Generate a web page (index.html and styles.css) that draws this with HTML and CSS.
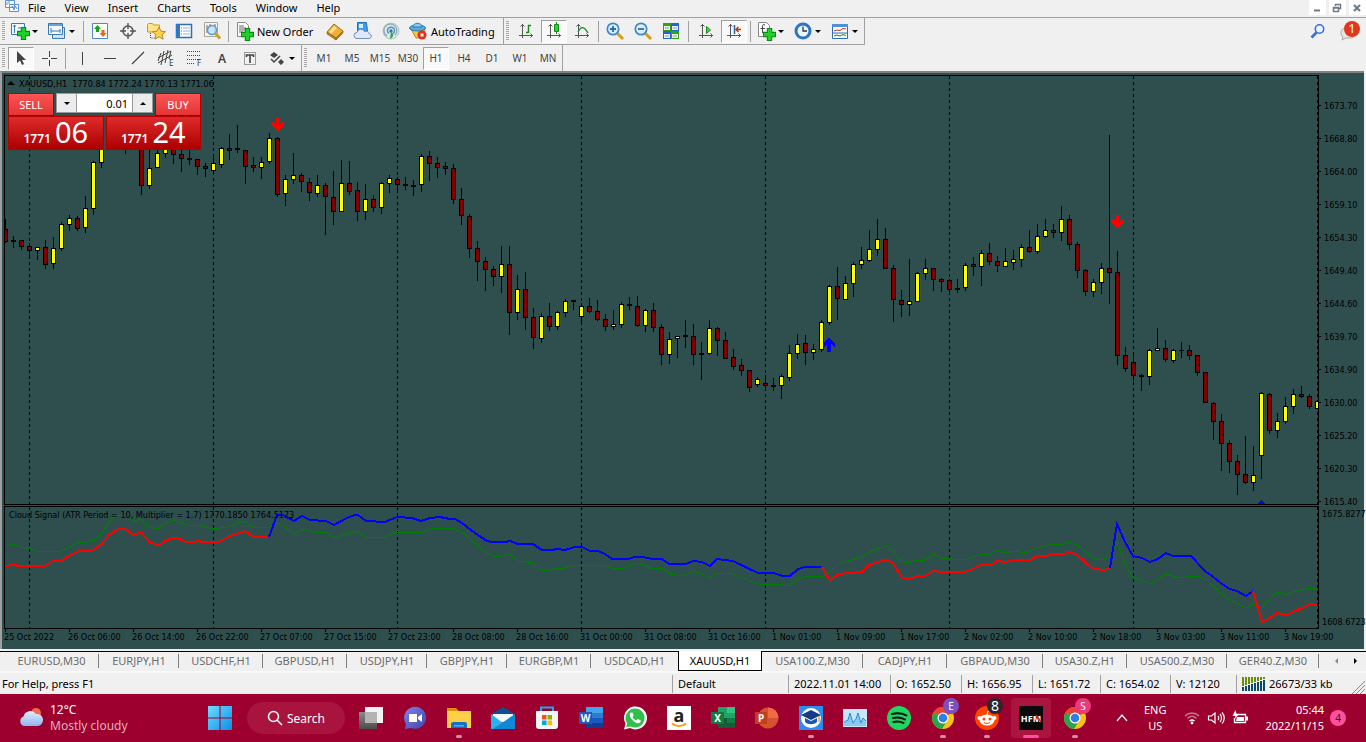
FILE: index.html
```
<!DOCTYPE html>
<html lang="en">
<head>
  <meta charset="UTF-8">
  <title>XAUUSD,H1</title>
  <link rel="stylesheet" href="styles.css">
</head>
<body>
  <svg class="defs" aria-hidden="true">
    <defs>
      <linearGradient id="blue" x1="0" y1="0" x2="1" y2="1"><stop offset="0" stop-color="#6fdcff"/><stop offset="1" stop-color="#0a8fe8"/></linearGradient>
      <linearGradient id="cloud" x1="0" y1="0" x2="0" y2="1"><stop offset="0" stop-color="#e4edfb"/><stop offset="1" stop-color="#8fb4ee"/></linearGradient>
      <linearGradient id="chat" x1="0" y1="0" x2="1" y2="1"><stop offset="0" stop-color="#7b83eb"/><stop offset="1" stop-color="#4146a8"/></linearGradient>
      <linearGradient id="grey" x1="0" y1="0" x2="0" y2="1"><stop offset="0" stop-color="#8a8a8a"/><stop offset="1" stop-color="#4c4c4c"/></linearGradient>
      <symbol id="axes" viewBox="0 0 20 20"><path d="M6.500 3v14M3 14.500h14M4.500 5.500l2-2 2 2M14.500 12.500l2 2-2 2" fill="none" stroke="#555"/></symbol>
      <symbol id="plus" viewBox="0 0 12 12"><path d="M4 .500h4V4h3.500v4H8v3.500H4V8H.500V4H4z" fill="#1fd02a" stroke="#0a8a12"/></symbol>
      <symbol id="chrome" viewBox="0 0 24 24">
        <circle cx="12" cy="12" r="11" fill="#fbc116"/>
        <path d="M12 12L2.500 6.500A11 11 0 0 1 21.500 6.500z" fill="#ea4335"/>
        <path d="M2.500 6.500A11 11 0 0 0 11 23l5.500-9L12 12z" fill="#2ba24c"/>
        <path d="M2.500 6.500A11 11 0 0 1 21.500 6.500H12z" fill="#ea4335"/>
        <circle cx="12" cy="12" r="5.500" fill="#fff"/><circle cx="12" cy="12" r="4.300" fill="#2f7de9"/>
      </symbol>
    </defs>
  </svg>

  <nav class="menubar">
    <svg class="app-icon" viewBox="0 0 16 16"><path d="M1.500 1.500h9v7h-9zM5.500 5.500h9v7h-9z" fill="#fff" stroke="#5b8fe0"/><path d="M7 9l1.500-2 1.500 4 1.500-4 1.500 3M3 3v3M5 2v3" fill="none" stroke="#5b8fe0"/></svg>
    <a href="#">File</a>
    <a href="#">View</a>
    <a href="#">Insert</a>
    <a href="#">Charts</a>
    <a href="#">Tools</a>
    <a href="#">Window</a>
    <a href="#">Help</a>
    <div class="window-controls">
      <button aria-label="Minimize"><svg viewBox="0 0 10 10"><path d="M2 7.500h6" stroke="#6d7b8a" stroke-width="2"/></svg></button>
      <button aria-label="Restore"><svg viewBox="0 0 10 10"><path d="M3.500 3V1.500h5v4H7M1.500 4.500h5v4h-5zM1 5h6M3 1.500h6" fill="none" stroke="#6d7b8a" stroke-width="1.500"/></svg></button>
      <button aria-label="Close"><svg viewBox="0 0 10 10"><path d="M2 2l6 6M8 2L2 8" stroke="#6d7b8a" stroke-width="2.200"/></svg></button>
    </div>
  </nav>

  <div class="toolbar toolbar-main">
    <div class="group">
      <span class="grip"></span>
      <button class="tool drop" aria-label="New chart"><svg viewBox="0 0 20 20"><path d="M1.500 2.500h13v11h-13z" fill="#f4f9fe" stroke="#3b78b5"/><path d="M3 5h3M4.500 4v8M8 7h4" stroke="#3b78b5"/><use href="#plus" x="7" y="6" width="13" height="13"/></svg></button>
      <button class="tool drop" aria-label="Profiles"><svg viewBox="0 0 20 20"><path d="M5.500 6.500h12v11h-12z" fill="#cfe2f6" stroke="#3b78b5"/><path d="M1.500 2.500h14v11h-14z" fill="#f4f9fe" stroke="#3b78b5"/><path d="M2 4h13" stroke="#6fa3d8" stroke-width="2"/><path d="M4 10h9M4 7v5M13 8v4" stroke="#3b78b5"/></svg></button>
      <span class="sep"></span>
      <button class="tool" aria-label="Market watch"><svg viewBox="0 0 20 20"><path d="M2.500 2.500h15v15h-15z" fill="#fff" stroke="#4b8ac8"/><path d="M7.500 4l3.500 4H9v3H6V8H4z" fill="#19a319"/><path d="M13 16l-3.500-4h2V9h3v3h2z" fill="#e8651a"/></svg></button>
      <button class="tool" aria-label="Data window"><svg viewBox="0 0 20 20"><circle cx="10" cy="10" r="5" fill="none" stroke="#555" stroke-width="1.500"/><path d="M10 2v6M10 12v6M2 10h6M12 10h6" stroke="#555" stroke-width="1.400"/></svg></button>
      <button class="tool" aria-label="Navigator"><svg viewBox="0 0 20 20"><path d="M1.500 3.500l1-1h4l1 1.500h6v7h-12z" fill="#ffe48a" stroke="#c79a28"/><path d="M4.500 12v5h4" fill="none" stroke="#444" stroke-dasharray="1 1"/><path d="M13 6l2 4.200 4.500.500-3.300 3 .900 4.500-4.100-2.300L9 18.200l.800-4.500-3.300-3 4.500-.500z" fill="#ffd24a" stroke="#b98a1a"/></svg></button>
      <button class="tool" aria-label="Terminal"><svg viewBox="0 0 20 20"><path d="M2.500 3.500h15v13h-15z" fill="#fff" stroke="#2d6db5" stroke-width="1.500"/><path d="M2 3h4v14H2z" fill="#2f78c8"/><path d="M9 7h7M9 10h7M9 13h7" stroke="#8fb6df"/><path d="M7 7h1M7 10h1M7 13h1" stroke="#c33"/></svg></button>
      <button class="tool" aria-label="Strategy tester"><svg viewBox="0 0 20 20"><path d="M2.500 1.500h13v14h-13z" fill="#f7f4ea" stroke="#a7a79c"/><path d="M5 4v8M8 3v5M13 3v9" stroke="#667"/><circle cx="10" cy="9" r="4.500" fill="#bfe0fa" fill-opacity=".8" stroke="#5e98cc" stroke-width="1.500"/><path d="M13.500 12.500l4.500 5" stroke="#d4a017" stroke-width="3"/></svg></button>
      <span class="sep"></span>
      <button class="tool labelled"><svg viewBox="0 0 20 20"><path d="M3.500 1.500h8l3 3v11h-11z" fill="#fff" stroke="#888"/><path d="M5 5h5M5 7h7M5 9h7M5 11h4" stroke="#666"/><use href="#plus" x="7" y="7" width="13" height="13"/></svg>New Order</button>
      <button class="tool" aria-label="MetaEditor"><svg viewBox="0 0 20 20"><path d="M2 11l7-8 9 7-7 7z" fill="#eab13b" stroke="#a56a0c"/><path d="M2 11v2l9 6v-2zM11 17l7-7v2l-7 7z" fill="#c4811a" stroke="#8d5a08" stroke-width=".600"/><path d="M4 11l5-6 3 2-6 6z" fill="#ffe08a"/></svg></button>
      <button class="tool" aria-label="Cloud storage"><svg viewBox="0 0 20 20"><path d="M4.500 1.500h9l1 9h-10z" fill="#3f9bea" stroke="#1f6fc0"/><path d="M6 3h4v4H6z" fill="#d8efff"/><path d="M4 17.500a3 3 0 0 1 0-6 4 4 0 0 1 7.500-1 3.600 3.600 0 0 1 5 2.500 2.300 2.300 0 0 1 0 4.500z" fill="#dfe8f6" stroke="#6f8fbb"/></svg></button>
      <button class="tool" aria-label="Signals"><svg viewBox="0 0 20 20"><circle cx="10" cy="10" r="8" fill="#dce8e4" stroke="#b5c8c4"/><path d="M6 15a6.500 6.500 0 1 1 8-1" fill="none" stroke="#8fb0c0" stroke-width="1.500"/><path d="M8 12.500a3.500 3.500 0 1 1 4 0" fill="none" stroke="#5b92c0" stroke-width="1.500"/><circle cx="10" cy="10" r="1.700" fill="#3b6fc0"/><path d="M10 11c3 1 3 5-1 7z" fill="#35a443"/></svg></button>
      <button class="tool labelled autotrading"><svg viewBox="0 0 20 20"><path d="M3 8l5 9 8-1 1-8z" fill="#f3c54b" stroke="#b98718"/><ellipse cx="9.500" cy="7" rx="8" ry="3" fill="#5aa9dc" stroke="#2b78ae"/><path d="M5 6c0-5 9-5 9 0z" fill="#8ccbf0" stroke="#2b78ae"/><circle cx="14" cy="14" r="4.500" fill="#e2301c"/><path d="M12.500 12.500h3v3h-3z" fill="#fff"/></svg>AutoTrading</button>
    </div>
    <div class="group">
      <span class="grip"></span>
      <button class="tool" aria-label="Bar chart"><svg viewBox="0 0 20 20"><use href="#axes"/><path d="M12.500 4v8M12 4.500h3M10 11.500h2" stroke="#158a1c" stroke-width="1.500"/></svg></button>
      <button class="tool pressed" aria-label="Candlesticks"><svg viewBox="0 0 20 20"><use href="#axes"/><path d="M12.500 1v12" stroke="#158a1c"/><path d="M10.500 3.500h4v7h-4z" fill="#2fd136" stroke="#158a1c"/></svg></button>
      <button class="tool" aria-label="Line chart"><svg viewBox="0 0 20 20"><use href="#axes"/><path d="M6 11c3-6 6-6 10 1" fill="none" stroke="#158a1c" stroke-width="1.300"/></svg></button>
      <span class="sep"></span>
      <button class="tool" aria-label="Zoom in"><svg viewBox="0 0 20 20"><path d="M12 12l6 6" stroke="#d4a017" stroke-width="3"/><circle cx="8" cy="8" r="5.700" fill="#d8eefc" stroke="#3f86c8" stroke-width="1.700"/><path d="M5 8h6M8 5v6" stroke="#2b6cae" stroke-width="1.800"/></svg></button>
      <button class="tool" aria-label="Zoom out"><svg viewBox="0 0 20 20"><path d="M12 12l6 6" stroke="#d4a017" stroke-width="3"/><circle cx="8" cy="8" r="5.700" fill="#d8eefc" stroke="#3f86c8" stroke-width="1.700"/><path d="M5 8h6" stroke="#2b6cae" stroke-width="1.800"/></svg></button>
      <button class="tool" aria-label="Tile windows"><svg viewBox="0 0 20 20"><path d="M2 2h8v8H2zM10 10h8v8h-8z" fill="#3c9f12"/><path d="M10 2h8v8h-8zM2 10h8v8H2z" fill="#2862d0"/><path d="M3 5h6v4H3zM11 5h6v4h-6zM3 13h6v4H3zM11 13h6v4h-6z" fill="#e9f3e4"/><path d="M4 7h4M12 7h4M4 15h4M12 15h4" stroke="#7d9fd0"/></svg></button>
      <span class="sep wide"></span>
      <button class="tool" aria-label="Auto scroll"><svg viewBox="0 0 20 20"><use href="#axes"/><path d="M10.500 5.500l4 3.500-4 3.500z" fill="#3fd13f" stroke="#158a1c"/></svg></button>
      <button class="tool pressed" aria-label="Chart shift"><svg viewBox="0 0 20 20"><use href="#axes"/><path d="M10.500 4v9" stroke="#2161b8" stroke-width="1.500"/><path d="M12 8.500h5M14.500 6L12 8.500l2.500 2.500" fill="none" stroke="#b8380e" stroke-width="1.500"/></svg></button>
      <span class="sep"></span>
      <button class="tool drop" aria-label="Indicators"><svg viewBox="0 0 20 20"><path d="M2.500 1.500h8l3 3v11h-11z" fill="#fff" stroke="#888"/><path d="M9 4c-2-1-2.500 0-2.500 2v6M4.500 7.500H9" fill="none" stroke="#444"/><use href="#plus" x="7" y="7" width="13" height="13"/></svg></button>
      <button class="tool drop" aria-label="Periods"><svg viewBox="0 0 20 20"><circle cx="10" cy="10" r="7" fill="#eaf5ff" stroke="#2a75c4" stroke-width="3"/><path d="M10 5.500V10h4" fill="none" stroke="#333" stroke-width="1.300"/></svg></button>
      <button class="tool drop" aria-label="Templates"><svg viewBox="0 0 20 20"><path d="M2.500 3.500h15v14h-15z" fill="#fff" stroke="#2d6db5"/><path d="M2 3h16v3H2z" fill="#4f90d8"/><path d="M2 12h16" stroke="#2d6db5"/><path d="M4 10l3-1 3 .500 3-2 3 .500" fill="none" stroke="#b8380e"/><path d="M4 15l3-1 3 1 3-1.500 3 1" fill="none" stroke="#158a1c"/></svg></button>
    </div>
    <div class="toolbar-right">
      <button aria-label="Search"><svg viewBox="0 0 20 20"><circle cx="11.500" cy="7" r="4.200" fill="#eef4ff" stroke="#3b6fd8" stroke-width="1.600"/><path d="M8.500 10.500L3.500 15.500" stroke="#3b6fd8" stroke-width="2.600"/></svg></button>
      <button class="messages" aria-label="Messages"><svg viewBox="0 0 20 20"><path d="M7 6a5 5 0 0 0-2 9l-1 3 4-2h5a5 5 0 0 0 4-5z" fill="#e4e4ea" stroke="#aaa"/></svg><span class="count">1</span></button>
    </div>
  </div>

  <div class="toolbar toolbar-lines">
    <div class="group">
      <span class="grip"></span>
      <button class="tool pressed" aria-label="Cursor"><svg viewBox="0 0 20 20"><path d="M6 3v12l3-2.500 2 4.500 2-1-2-4h4z" fill="#444"/></svg></button>
      <button class="tool" aria-label="Crosshair"><svg viewBox="0 0 20 20"><path d="M10.500 3v6M10.500 12v6M3 10.500h6M12 10.500h6" stroke="#444"/></svg></button>
      <span class="sep"></span>
      <button class="tool" aria-label="Vertical line"><svg viewBox="0 0 20 20"><path d="M10.500 4v13" stroke="#444"/></svg></button>
      <button class="tool" aria-label="Horizontal line"><svg viewBox="0 0 20 20"><path d="M4 10.500h12" stroke="#444"/></svg></button>
      <button class="tool" aria-label="Trendline"><svg viewBox="0 0 20 20"><path d="M4 16L16 4" stroke="#444" stroke-width="1.200"/></svg></button>
      <button class="tool" aria-label="Channel"><svg viewBox="0 0 20 20"><path d="M2 10l13-7M2 15L16 7M5 17l3-14M9 15l3-13M13 11l2-8M2 13l3-8" stroke="#444"/><text x="13" y="18" class="icon-letter">E</text></svg></button>
      <button class="tool" aria-label="Fibonacci"><svg viewBox="0 0 20 20"><path d="M3 3.500h14M3 7.500h14M3 11.500h14M3 15.500h8" stroke="#444" stroke-dasharray="1 1"/><text x="13" y="18" class="icon-letter">F</text></svg></button>
      <button class="tool letter">A</button>
      <button class="tool" aria-label="Text label"><svg viewBox="0 0 20 20"><path d="M4.500 4.500h11v12h-11z" fill="none" stroke="#444" stroke-dasharray="1 1"/><path d="M6.500 9V7h7v2M10 7v8" fill="none" stroke="#444" stroke-width="1.600"/></svg></button>
      <button class="tool drop" aria-label="Arrows"><svg viewBox="0 0 20 20"><path d="M3 7l4-3 4 3-4 3zM11 14l3-3 3 3-3 3z" fill="#444"/><path d="M4 11l3 3 6-6" fill="none" stroke="#444" stroke-width="1.500"/></svg></button>
    </div>
    <div class="group periods">
      <span class="grip"></span>
      <button class="tool">M1</button>
      <button class="tool">M5</button>
      <button class="tool">M15</button>
      <button class="tool">M30</button>
      <button class="tool pressed">H1</button>
      <button class="tool">H4</button>
      <button class="tool">D1</button>
      <button class="tool">W1</button>
      <button class="tool">MN</button>
    </div>
  </div>

  <main class="chart">
    <section class="pane">
      <svg id="price"></svg>
      <p class="pane-title"><span class="triangle"></span>XAUUSD,H1&nbsp; 1770.84 1772.24 1770.13 1771.06</p>
      <form class="one-click">
        <div class="deal-top">
          <button type="button" class="side">SELL</button>
          <div class="volume">
            <button type="button" aria-label="Less"><span class="down"></span></button>
            <input type="text" value="0.01" aria-label="Volume">
            <button type="button" aria-label="More"><span class="up"></span></button>
          </div>
          <button type="button" class="side">BUY</button>
        </div>
        <div class="deal-prices">
          <button type="button"><small>1771</small>06</button>
          <button type="button"><small>1771</small>24</button>
        </div>
      </form>
    </section>
    <ul class="axis price-axis">
      <li>1673.70</li>
      <li>1668.80</li>
      <li>1664.00</li>
      <li>1659.10</li>
      <li>1654.30</li>
      <li>1649.40</li>
      <li>1644.60</li>
      <li>1639.70</li>
      <li>1634.90</li>
      <li>1630.00</li>
      <li>1625.20</li>
      <li>1620.30</li>
      <li>1615.40</li>
    </ul>
    <section class="pane">
      <svg id="signal"></svg>
      <p class="pane-title">Cloud Signal (ATR Period = 10, Multiplier = 1.7) 1770.1850 1764.5173</p>
    </section>
    <ul class="axis signal-axis">
      <li>1675.8277</li>
      <li>1608.6723</li>
    </ul>
    <ul class="dates">
      <li>25 Oct 2022</li>
      <li>26 Oct 06:00</li>
      <li>26 Oct 14:00</li>
      <li>26 Oct 22:00</li>
      <li>27 Oct 07:00</li>
      <li>27 Oct 15:00</li>
      <li>27 Oct 23:00</li>
      <li>28 Oct 08:00</li>
      <li>28 Oct 16:00</li>
      <li>31 Oct 00:00</li>
      <li>31 Oct 08:00</li>
      <li>31 Oct 16:00</li>
      <li>1 Nov 01:00</li>
      <li>1 Nov 09:00</li>
      <li>1 Nov 17:00</li>
      <li>2 Nov 02:00</li>
      <li>2 Nov 10:00</li>
      <li>2 Nov 18:00</li>
      <li>3 Nov 03:00</li>
      <li>3 Nov 11:00</li>
      <li>3 Nov 19:00</li>
    </ul>
  </main>

  <nav class="tabs">
    <a href="#">EURUSD,M30</a>
    <a href="#">EURJPY,H1</a>
    <a href="#">USDCHF,H1</a>
    <a href="#">GBPUSD,H1</a>
    <a href="#">USDJPY,H1</a>
    <a href="#">GBPJPY,H1</a>
    <a href="#">EURGBP,M1</a>
    <a href="#" class="last">USDCAD,H1</a>
    <a href="#" class="active">XAUUSD,H1</a>
    <a href="#">USA100.Z,M30</a>
    <a href="#">CADJPY,H1</a>
    <a href="#">GBPAUD,M30</a>
    <a href="#">USA30.Z,H1</a>
    <a href="#">USA500.Z,M30</a>
    <a href="#">GER40.Z,M30</a>
    <div class="tab-scroll">
      <button aria-label="Previous tabs" class="prev"></button>
      <button aria-label="Next tabs" class="next"></button>
    </div>
  </nav>

  <footer class="status">
    <span>For Help, press F1</span>
    <span>Default</span>
    <span>2022.11.01 14:00</span>
    <span>O: 1652.50</span>
    <span>H: 1656.95</span>
    <span>L: 1651.72</span>
    <span>C: 1654.02</span>
    <span>V: 12120</span>
    <span class="traffic"><svg id="traffic" viewBox="0 0 24 14"></svg>26673/33 kb</span>
    <svg class="resize" viewBox="0 0 15 14"><path d="M1 14L14 1M5 14l9-9M9 14l5-5" stroke="#888"/></svg>
  </footer>

  <div class="taskbar">
    <div class="weather">
      <svg viewBox="0 0 26 24"><circle cx="18" cy="7" r="5" fill="#f2694b"/><path d="M6 20a5 5 0 0 1-.500-9.500A7 7 0 0 1 18 8a6 6 0 0 1 2 12z" fill="url(#cloud)"/></svg>
      <p>12°C<span>Mostly cloudy</span></p>
    </div>
    <div class="apps">
      <button class="app" aria-label="Start"><svg viewBox="0 0 24 24"><path d="M0 0h11.500v11.500H0zM12.500 0H24v11.500H12.500zM0 12.500h11.500V24H0zM12.500 12.500H24V24H12.500z" fill="url(#blue)"/></svg></button>
      <button class="search"><svg viewBox="0 0 16 16"><circle cx="6.500" cy="6.500" r="5" fill="none" stroke="#fff" stroke-width="1.500"/><path d="M10 10l5 5" stroke="#fff" stroke-width="1.500"/></svg>Search</button>
      <button class="app" aria-label="Task view"><svg viewBox="0 0 24 24"><path d="M0 6h18v17H0z" fill="url(#grey)"/><path d="M6 1h18v16H6z" fill="#f2f2f2"/><path d="M6 6h12v11H6z" fill="#b3b3b3"/></svg></button>
      <button class="app" aria-label="Chat"><svg viewBox="0 0 24 24"><path d="M2 23l1-5A11 11 0 1 1 8 22z" fill="url(#chat)"/><path d="M6 8h8v8H6zM15 11l4-3v8l-4-3z" fill="#fff"/></svg></button>
      <button class="app open" aria-label="File Explorer"><svg viewBox="0 0 24 24"><path d="M0 2h9l3 3h12v8H0z" fill="#d9920a"/><path d="M0 5h24v17H0z" fill="#ffcf48"/><path d="M4 22v-4a2 2 0 0 1 2-2h12a2 2 0 0 1 2 2v4z" fill="#0f72c4"/><path d="M7 19h10v1.500H7z" fill="#48b0f0"/></svg></button>
      <button class="app" aria-label="Mail"><svg viewBox="0 0 24 24"><path d="M0 8l12-7 12 7v8H0z" fill="#0f4f94"/><path d="M2 8h20v8H2z" fill="#f3f7fa"/><path d="M0 8l12 9 12-9v15H0z" fill="#28b3ee"/><path d="M24 8v15H2z" fill="#1188d6"/><path d="M2 8h20l-10 7.500z" fill="#f3f7fa"/></svg></button>
      <button class="app" aria-label="Store"><svg viewBox="0 0 24 24"><path d="M6 6V1.500h12V6" fill="none" stroke="#20a8e8" stroke-width="2"/><path d="M1 5h22v15a3 3 0 0 1-3 3H4a3 3 0 0 1-3-3z" fill="#f6f6f6"/><path d="M7 9h4.500v4.500H7z" fill="#f25022"/><path d="M12.500 9H17v4.500h-4.500z" fill="#7fba00"/><path d="M7 14.500h4.500V19H7z" fill="#00a4ef"/><path d="M12.500 14.500H17V19h-4.500z" fill="#ffb900"/></svg></button>
      <button class="app" aria-label="Word"><svg viewBox="0 0 24 24"><path d="M7 1h17v6H7z" fill="#41a5ee"/><path d="M7 7h17v5H7z" fill="#2b7cd3"/><path d="M7 12h17v5H7z" fill="#185abd"/><path d="M7 17h17v5H7z" fill="#103f91"/><path d="M0 6h13v12H0z" fill="#1d5ab8"/><text x="6.500" y="16" class="office">W</text></svg></button>
      <button class="app" aria-label="WhatsApp"><svg viewBox="0 0 24 24"><path d="M1 23.500l1.600-5.800A11.500 11.500 0 1 1 7 22z" fill="#fff"/><path d="M3.200 21.200l1-3.800a9.500 9.500 0 1 1 3.300 3z" fill="#2fbf4a"/><path d="M8 6.500c-2 1-1.500 4 1 7s6 4.700 8 3c1-1 1-2 .500-2.200l-2.600-1.300c-.900 0-1 1.500-1.800 1.300-1.600-.600-3-2-3.500-3.400 0-.700 1.100-1 .900-1.800L9.500 6.500z" fill="#fff"/></svg></button>
      <button class="app" aria-label="Amazon"><svg viewBox="0 0 24 24"><path d="M0 0h24v24H0z" fill="#fff"/><text x="12" y="16" class="amazon">a</text><path d="M5 17.500c4 3.500 10 3.500 14 0" fill="none" stroke="#f90" stroke-width="1.800"/></svg></button>
      <button class="app" aria-label="Excel"><svg viewBox="0 0 24 24"><path d="M7 1h17v11H7z" fill="#21a366"/><path d="M16 1h8v6h-8z" fill="#33c481"/><path d="M7 12h17v10H7z" fill="#185c37"/><path d="M16 12h8v5h-8z" fill="#107c41"/><path d="M0 6h13v12H0z" fill="#107c41"/><text x="6.500" y="16" class="office">X</text></svg></button>
      <button class="app" aria-label="PowerPoint"><svg viewBox="0 0 24 24"><circle cx="13" cy="12" r="10.500" fill="#d35230"/><path d="M13 1.500A10.500 10.500 0 0 1 23.500 12H13z" fill="#ed6c47"/><path d="M0 6h12v12H0z" fill="#c43e1c"/><text x="6" y="16" class="office">P</text></svg></button>
      <button class="app open" aria-label="Learning"><svg viewBox="0 0 24 24"><path d="M0 0h24v24H0z" fill="#2d8cf0"/><circle cx="12" cy="12" r="10" fill="#fff"/><path d="M2 9l10-5 10 5-10 5z" fill="#123c86"/><path d="M6 12v4c3 3 9 3 12 0v-4l-6 3z" fill="#1b58b8"/><path d="M20 10v6" stroke="#f0a020" stroke-width="1.500"/></svg></button>
      <button class="app" aria-label="Monitor"><svg viewBox="0 0 24 24"><path d="M0 3h24v18H0z" fill="#c8e6f7"/><path d="M1 16l4-2 2-7 3 10 3-4 2-6 3 10 2-5 3 3v5H1z" fill="#8cc8ee"/><path d="M1 16l4-2 2-7 3 10 3-4 2-6 3 10 2-5 3 3" fill="none" stroke="#2a8bd0"/></svg></button>
      <button class="app" aria-label="Spotify"><svg viewBox="0 0 24 24"><circle cx="12" cy="12" r="12" fill="#1ed760"/><path d="M5 8c5-1.500 10-1 14.500 1.500M6 12c4-1 8-.800 12 1.500M6.500 16c4-1 7-.500 10 1" fill="none" stroke="#101010" stroke-width="2" stroke-linecap="round"/></svg></button>
      <button class="app open" aria-label="Chrome"><svg viewBox="0 0 24 24"><use href="#chrome"/></svg><span class="badge violet">E</span></button>
      <button class="app open" aria-label="Reddit"><svg viewBox="0 0 24 24"><circle cx="12" cy="12" r="12" fill="#ff4500"/><ellipse cx="12" cy="14" rx="7.500" ry="5.500" fill="#fff"/><circle cx="4.500" cy="12" r="2" fill="#fff"/><circle cx="19.500" cy="12" r="2" fill="#fff"/><path d="M12 9l1-4 4 1" fill="none" stroke="#fff"/><circle cx="9" cy="13" r="1.500" fill="#ff4500"/><circle cx="15" cy="13" r="1.500" fill="#ff4500"/><path d="M9 16.500c2 1.300 4 1.300 6 0" fill="none" stroke="#ff4500"/></svg><span class="badge dark">8</span></button>
      <button class="app open current" aria-label="HFM"><svg viewBox="0 0 24 24"><path d="M0 0h24v24H0z" fill="#0a0a0a"/><text x="12" y="16" class="hfm">HFM</text><path d="M17 9l5 7" stroke="#e01f2d" stroke-width="1.500"/></svg></button>
      <button class="app open" aria-label="Chrome"><svg viewBox="0 0 24 24"><use href="#chrome"/></svg><span class="badge pink">S</span></button>
    </div>
    <div class="tray">
      <button class="chevron" aria-label="Show hidden icons"><svg viewBox="0 0 12 12"><path d="M1 9l5-6 5 6" fill="none" stroke="#fff" stroke-width="1.200"/></svg></button>
      <p class="language">ENG<br>US</p>
      <svg viewBox="0 0 18 18"><path d="M2 7c4-4 10-4 14 0M4.500 9.500c3-3 6-3 9 0" fill="none" stroke="#c4788f" stroke-width="1.300"/><path d="M6.500 12c2-1.700 3-1.700 5 0" fill="none" stroke="#fff" stroke-width="1.500"/><circle cx="9" cy="14" r="1.400" fill="#fff"/></svg>
      <svg viewBox="0 0 18 18"><path d="M1.500 7v4h3L8 14V4L4.500 7zM11 7c1 1 1 3 0 4M13 5c2 2 2 6 0 8M15 3.500c3 3 3 8 0 11" fill="none" stroke="#fff" stroke-width="1.200"/></svg>
      <svg viewBox="0 0 18 18"><path d="M4 5.500h10.500v8H3.500V9" fill="none" stroke="#fff" stroke-width="1.300"/><path d="M6 8h7v4H5zM15 7.500h2v4h-2z" fill="#fff"/><path d="M4.500 1L1.500 7h3l-1.500 4 5-6H5.500z" fill="#fff"/></svg>
      <p class="clock">05:44<br>2022/11/15</p>
      <span class="notifications">4</span>
    </div>
  </div>

  <script src="chart.js"></script>
</body>
</html>
```

FILE: styles.css
```
* {
  box-sizing: border-box;
}

body {
  margin: 0;
  height: 100vh;
  display: flex;
  flex-direction: column;
  overflow: hidden;
  background: #f0f0f0;
  color: #000;
  font-family: "Noto Sans", "Open Sans", sans-serif;
  font-size: 11px;
}

button {
  margin: 0;
  padding: 0;
  border: none;
  background: none;
  color: inherit;
  font: inherit;
}

a {
  color: inherit;
  text-decoration: none;
}

p,
ul {
  margin: 0;
  padding: 0;
  list-style: none;
}

svg {
  display: block;
  flex: none;
}

.defs {
  position: absolute;
  width: 0;
  height: 0;
}

/* menu */

.menubar {
  display: flex;
  align-items: center;
  gap: 19px;
  height: 18px;
  padding-left: 4px;
  padding-bottom: 3px;
  border-bottom: 1px solid #a0a0a0;
}

.app-icon {
  width: 16px;
  height: 16px;
  margin-right: -11px;
}

.window-controls {
  display: flex;
  gap: 3px;
  margin-left: auto;
}

.window-controls button {
  width: 17px;
  height: 15px;
  padding: 3px;
  background: #fff;
}

.window-controls svg {
  width: 10px;
  height: 10px;
}

/* toolbars */

.toolbar {
  display: flex;
  height: 27px;
}

.toolbar-lines {
  height: 26px;
}

.toolbar-main .group {
  border-bottom: 1px solid #a0a0a0;
}

.group {
  display: flex;
  align-items: center;
  padding: 1px 0 1px 2px;
  border-right: 1px solid #a0a0a0;
}

.grip {
  width: 3px;
  height: 20px;
  margin-right: 2px;
  background: repeating-linear-gradient(#a8a8a8 0 1px, #f0f0f0 1px 2px);
}

.group + .group .grip {
  margin-right: 3px;
}

.sep {
  width: 1px;
  height: 21px;
  margin: 0 2px;
  background: #a0a0a0;
}

.sep.wide {
  margin: 0 3px;
}

.tool {
  display: flex;
  align-items: center;
  justify-content: center;
  width: 26px;
  height: 23px;
  margin: 0 1px;
}

.tool svg {
  width: 20px;
  height: 20px;
  overflow: visible;
}

.tool.drop {
  justify-content: flex-start;
  width: 35px;
  padding-left: 2px;
}

.tool.drop::after {
  content: "";
  margin-left: 2px;
  border: 3px solid transparent;
  border-top-color: #000;
  border-bottom: 0;
}

.tool.pressed {
  background: #f9f9f9;
  border: 1px solid #fff;
  border-top-color: #a0a0a0;
  border-left-color: #a0a0a0;
}

.tool.labelled {
  width: 88px;
  justify-content: flex-start;
  gap: 3px;
  padding-left: 2px;
}

.tool.autotrading {
  width: 96px;
}

.tool.letter {
  color: #444;
  font-size: 12px;
  font-weight: 600;
}

.icon-letter {
  font-size: 8px;
  fill: #333;
}

.periods {
  color: #444;
  font-size: 10px;
}

.toolbar-right {
  display: flex;
  align-items: center;
  gap: 10px;
  margin-left: auto;
  padding-right: 6px;
}

.toolbar-right svg {
  width: 20px;
  height: 20px;
}

.messages {
  position: relative;
  width: 22px;
}

.count {
  position: absolute;
  top: -1px;
  right: 0;
  width: 16px;
  height: 16px;
  border-radius: 8px;
  background: #e2371f;
  color: #fff;
  font-size: 12px;
  line-height: 16px;
}

/* chart */

.chart {
  flex: 1;
  min-height: 0;
  display: grid;
  grid-template-columns: minmax(0, 1fr) 45px;
  grid-template-rows: minmax(0, 1fr) 123px 19px;
  row-gap: 1px;
  padding: 2px 0 0 2px;
  margin-right: 2px;
  border-top: 2px solid #808080;
  border-left: 2px solid #a0a0a0;
  background: #2f4f4f;
  font-family: "DejaVu Sans Condensed", "DejaVu Sans", sans-serif;
  font-size: 9px;
}

.pane {
  position: relative;
  border: 1px solid #000;
}

.pane > svg {
  width: 100%;
  height: 100%;
  overflow: hidden;
  shape-rendering: crispEdges;
}

.pane-title {
  position: absolute;
  top: 2px;
  left: 4px;
  line-height: 12px;
  white-space: nowrap;
}

.triangle {
  display: inline-block;
  margin: 0 4px 2px -2px;
  border: 4px solid transparent;
  border-bottom-color: #000;
  border-top: 0;
}

.day {
  stroke: #000;
  stroke-dasharray: 3 3;
}

.wick {
  fill: #000;
}

.candle {
  stroke: #000;
}

.rise {
  fill: #ff0;
}

.fall {
  fill: #800000;
}

.sell-arrow {
  fill: #f00;
}

.buy-arrow {
  fill: #00f;
}

.band {
  fill: none;
  stroke: #008000;
}

.trend {
  fill: none;
  stroke-width: 2;
}

.trend.long {
  stroke: #f00;
}

.trend.short {
  stroke: #00f;
}

.axis li {
  display: flex;
  align-items: center;
  gap: 3px;
}

.axis li::before {
  content: "";
  width: 2px;
  height: 1px;
  background: #000;
}

.price-axis {
  min-height: 0;
  padding-top: 14px;
}

.price-axis li {
  height: 33px;
}

.signal-axis {
  display: flex;
  flex-direction: column;
  justify-content: space-between;
}

.signal-axis li {
  height: 15px;
}

.dates {
  grid-column: 1 / -1;
  display: flex;
  margin-top: -1px;
  overflow: hidden;
}

.dates li {
  flex: none;
  width: 64px;
  line-height: 11px;
  white-space: nowrap;
}

.dates li::before {
  content: "";
  display: block;
  width: 1px;
  height: 3px;
  margin-left: 1px;
  background: #000;
}

/* one click trading */

.one-click {
  position: absolute;
  top: 17px;
  left: 3px;
  width: 193px;
  color: #fff;
  font-family: "Noto Sans", sans-serif;
  font-size: 11px;
}

.deal-top {
  display: flex;
  justify-content: space-between;
  align-items: flex-start;
}

.side {
  width: 46px;
  height: 23px;
  padding-bottom: 1px;
  border: 1px solid #b40000;
  border-bottom-color: #800;
  background: linear-gradient(#fb5454, #e53434);
}

.volume {
  display: flex;
  width: 97px;
  height: 20px;
  border: 1px solid #999;
  background: #fff;
}

.volume button {
  display: flex;
  align-items: center;
  justify-content: center;
  width: 19px;
  background: #ececec;
}

.volume input {
  flex: 1;
  min-width: 0;
  padding: 0 4px;
  border: solid #999;
  border-width: 0 1px;
  font: inherit;
  text-align: right;
}

.down,
.up {
  border: 3px solid transparent;
  border-top-color: #000;
  border-bottom: 0;
}

.up {
  border-top: 0;
  border-bottom: 3px solid #000;
}

.deal-prices {
  display: flex;
  gap: 2px;
}

.deal-prices button {
  display: flex;
  align-items: baseline;
  justify-content: center;
  gap: 4px;
  flex: 1;
  height: 34px;
  border: 1px solid #b40000;
  background: linear-gradient(#de2a2a, #ac0000);
  font-size: 29px;
  line-height: 30px;
}

.deal-prices small {
  font-size: 12px;
  font-weight: 600;
}

/* chart tabs */

.tabs {
  display: grid;
  grid-template-columns: 99px 80px 84px 84px 80px 80px 84px 87px 84px 101px 84px 96px 84px 100px 92px 1fr;
  height: 22px;
  margin-top: 2px;
  box-shadow: inset 0 1px #000;
  border-bottom: 2px solid #fafafa;
  color: #6d6d6d;
  text-align: center;
}

.tabs a {
  position: relative;
  line-height: 20px;
  white-space: nowrap;
}

.tabs a:first-child {
  padding-left: 4px;
}

.tabs a:not(.active):not(.last)::after {
  content: "";
  position: absolute;
  top: 3px;
  right: 0;
  width: 1px;
  height: 14px;
  background: #808080;
}

.tabs .active {
  line-height: 19px;
  border: 1px solid #000;
  border-top: 0;
  background: #fff;
  color: #000;
}

.tab-scroll {
  display: flex;
  align-items: center;
  justify-content: flex-end;
  gap: 16px;
  padding-right: 9px;
}

.tab-scroll button {
  border: 3px solid transparent;
}

.tab-scroll .prev {
  border-right-color: #888;
  border-left: 0;
}

.tab-scroll .next {
  border-left-color: #000;
  border-right: 0;
}

/* status bar */

.status {
  display: grid;
  grid-template-columns: 1fr 116px 102px 71px 71px 68px 70px 66px 115px 15px;
  align-items: center;
  height: 21px;
  white-space: nowrap;
}

.status span {
  height: 18px;
  padding-left: 5px;
  border-left: 1px solid #a0a0a0;
  line-height: 17px;
}

.status span:first-child {
  padding-left: 2px;
  border: none;
}

.status .traffic {
  display: flex;
  align-items: center;
  gap: 3px;
}

.traffic svg {
  width: 24px;
  height: 14px;
}

.resize {
  width: 15px;
  height: 14px;
  align-self: end;
}

/* taskbar */

.taskbar {
  display: grid;
  grid-template-columns: 198px 1fr auto;
  align-items: center;
  height: 48px;
  background: #9d002e;
  color: #fff;
  font-size: 12px;
}

.weather {
  display: flex;
  align-items: center;
  gap: 6px;
  padding-left: 18px;
  line-height: 16px;
}

.weather svg {
  width: 26px;
  height: 24px;
}

.weather span {
  display: block;
  color: #e0b0be;
}

.apps {
  display: flex;
  align-items: center;
}

.app {
  position: relative;
  display: flex;
  align-items: center;
  justify-content: center;
  width: 40px;
  height: 40px;
  margin: 0 2px;
  border-radius: 4px;
}

.app svg {
  width: 24px;
  height: 24px;
  overflow: visible;
}

.app.open::after {
  content: "";
  position: absolute;
  bottom: 0;
  left: 17px;
  width: 6px;
  height: 3px;
  border-radius: 2px;
  background: #d48fa4;
}

.app.current {
  background: #a9153f;
}

.app.current::after {
  left: 12px;
  width: 16px;
  background: #ff4fa3;
}

.office {
  fill: #fff;
  font-size: 10px;
  font-weight: bold;
  text-anchor: middle;
}

.amazon {
  fill: #222;
  font-size: 18px;
  font-weight: bold;
  text-anchor: middle;
}

.hfm {
  fill: #fff;
  font-size: 9px;
  font-weight: bold;
  text-anchor: middle;
}

.badge {
  position: absolute;
  top: 0;
  right: 4px;
  width: 16px;
  height: 16px;
  border-radius: 8px;
  font-size: 10px;
  line-height: 16px;
}

.violet {
  background: #7a52bd;
}

.dark {
  background: #29262e;
  font-size: 14px;
}

.pink {
  background: #ea3a7b;
}

.search {
  display: flex;
  align-items: center;
  justify-content: center;
  gap: 4px;
  width: 98px;
  height: 32px;
  margin: 0 4px 0 5px;
  border-radius: 16px;
  background: #a8143e;
}

.search svg {
  width: 16px;
  height: 16px;
}

.tray {
  display: flex;
  align-items: center;
  gap: 6px;
  padding-right: 20px;
  line-height: 16px;
  text-align: center;
}

.tray svg {
  width: 18px;
  height: 18px;
}

.tray .chevron svg {
  width: 12px;
  height: 12px;
}

.language {
  margin: 0 11px 0 10px;
  font-size: 11px;
}

.clock {
  margin-left: 10px;
  font-size: 11px;
  text-align: right;
}

.notifications {
  width: 16px;
  height: 16px;
  border-radius: 8px;
  background: #ff4fa0;
  color: #222;
  font-size: 10px;
}
```

FILE: chart.js
```
const STEP = 8;      // distance between two candles
const TOP = 76;      // y of the first row inside the price pane

// high, body top, body bottom, low; y = rise, r = fall
const candles = `
219 229 242 243 r,236 240 241 248 r,240 240 247 250 r,243 246 251 258 r,247 247 251 260 y,240 247 265 269 r,
237 248 264 269 y,222 224 249 251 y,215 218 225 231 y,216 218 229 231 r,196 208 228 233 y,161 162 209 215 y,
125 130 163 168 y,120 125 131 140 r,120 124 130 140 y,120 126 132 154 r,120 128 134 145 r,125 132 186 195 r,
148 168 186 189 y,140 153 168 168 y,140 148 154 158 y,140 146 155 164 r,150 154 159 172 r,150 158 159 165 r,
159 159 167 175 r,163 166 169 177 r,157 163 171 172 y,147 148 165 168 y,134 148 151 160 r,125 148 149 153 r,
150 150 167 184 r,157 165 168 172 r,157 162 168 179 y,133 138 162 164 y,137 138 195 197 r,175 179 194 206 y,
153 175 180 184 y,173 175 182 192 r,178 182 193 201 r,175 185 194 197 y,183 185 197 235 r,171 197 212 225 r,
160 183 212 212 y,161 183 192 195 r,182 190 212 221 r,184 199 212 220 y,195 199 208 212 r,182 183 208 214 y,
175 178 184 193 y,177 179 185 192 r,177 184 185 190 r,180 185 186 196 r,154 156 185 192 y,151 156 164 181 r,
157 163 168 178 r,162 166 169 175 r,164 168 200 204 r,188 199 216 225 r,214 216 249 258 r,241 248 262 281 r,
257 261 270 291 r,266 269 277 286 r,246 264 277 293 y,246 264 313 335 r,275 289 313 320 y,272 289 318 330 r,
308 317 338 349 r,313 316 339 343 y,303 316 327 331 r,311 312 327 330 y,299 301 313 317 y,300 300 301 310 r,
303 306 317 324 y,298 306 312 313 r,300 311 320 321 r,314 319 327 331 r,310 324 327 330 y,302 304 325 328 y,
297 304 305 310 r,296 306 326 327 r,309 310 326 332 y,303 310 328 332 r,324 327 355 365 r,332 339 355 364 y,
336 336 339 358 y,320 335 336 348 r,324 336 355 365 r,342 353 354 380 r,320 328 354 355 y,327 328 341 356 r,
332 340 359 359 r,349 357 367 370 r,359 365 371 376 r,370 370 388 392 r,377 379 385 387 y,375 383 386 390 r,
378 385 386 391 r,374 376 386 399 y,345 353 378 381 y,334 344 354 359 y,335 343 353 365 r,344 349 353 360 y,
320 322 350 352 y,285 286 323 325 y,267 286 299 320 r,276 283 300 300 y,262 264 284 297 y,247 260 265 269 y,
230 249 261 262 y,219 239 250 256 y,228 239 269 269 r,265 268 300 322 r,290 300 305 317 r,259 301 305 316 y,
272 273 302 302 y,259 268 274 280 y,268 268 280 291 r,278 279 282 292 r,279 280 290 293 r,279 288 289 293 r,
263 265 288 291 y,257 264 267 276 r,250 253 267 286 y,243 253 262 265 r,256 261 266 272 r,248 261 267 267 y,
250 259 263 270 y,244 247 260 267 y,230 247 252 253 r,224 236 252 254 y,219 230 237 238 y,224 230 233 238 r,
206 219 233 241 y,215 219 245 250 r,242 244 271 278 r,269 270 292 296 r,279 282 292 297 y,263 268 283 294 y,
135 268 273 304 r,251 272 356 365 r,347 355 369 372 r,352 362 376 381 r,374 375 376 391 r,349 350 377 385 y,
328 348 351 351 y,340 348 360 362 r,349 350 361 363 y,342 350 350 358 r,345 350 356 360 r,355 355 373 376 r,
372 372 403 403 r,402 403 422 440 r,414 421 444 471 r,440 443 462 473 r,455 461 475 495 r,436 474 483 484 r,
446 475 483 491 y,392 393 456 479 y,393 394 431 434 r,413 421 431 438 y,397 406 422 424 y,389 394 407 414 y,
386 394 397 398 r,394 396 407 409 r,401 401 409 409 y`;

// indicator points, stored in thirds of a pixel; every part has its own start
const band = [
  [0, '16,139 40,133 60,141 85,145 110,152 184,152 230,128 258,127 284,120 307,98 330,62 350,45 376,44 405,62 424,56 446,82 472,86 490,74 518,60 570,79 595,76 640,86 680,80 733,62 760,82 808,85 830,70 855,80 881,101 905,86 930,94 955,99 978,97 1002,115 1030,106 1070,92 1098,111 1155,111 1192,97 1240,97 1262,100 1290,88 1310,84'],
  [1350, '0,85 15,86 40,98 75,130 105,156 135,170 155,169 178,163 205,182 250,190 275,211 300,211 320,203 345,205 370,194 395,194 420,199 445,194 465,196 490,206 520,205 563,190 610,206 635,203 660,222 680,226 708,226 730,214 755,223 780,235 800,218 850,222 885,236 925,253 975,253 1000,256 1020,255 1045,236 1068,227 1115,230 1140,215 1165,192 1190,184 1235,172 1270,149 1307,139 1330,150'],
  [2700, '0,182 25,189 52,179 75,179 103,163 125,173 155,177 200,177 245,163 270,163 292,151 315,159 345,154 370,158 390,153 410,143 460,132 490,132 508,127 530,135 580,175 600,179 630,172 652,125 675,190 700,234 725,240 750,252 773,241 797,221 820,229 845,233 870,229 898,230 920,240 965,283 990,300 1037,324 1060,313 1085,323 1110,295 1135,276 1157,286 1180,275 1230,263 1252,266']
];

const trends = [
  ['long', [[0, '16,199 40,195 60,199 135,199 160,184 184,183 208,167 236,153 260,153 280,150 307,132 328,105 355,87 376,87 400,105 414,99 427,98 448,126 470,135 480,135 495,123 515,114 530,114 558,126 578,126 595,122 610,126 655,126 685,112 735,92 760,110 808,110']]],
  ['short', [
    [0, '808,110 830,44 848,45 881,64 905,49 930,60 978,63 1002,75 1040,55 1065,44 1075,44 1097,62 1155,65 1190,50 1235,53 1262,64 1290,53 1320,50'],
    [1350, '0,56 15,58 35,68 75,98 110,123 125,127 165,126 180,122 205,132 250,132 275,150 305,150 320,146 345,151 375,140 395,141 420,152 445,154 465,161 487,177 535,177 555,171 580,170 605,177 635,177 658,192 708,192 730,182 755,187 780,199 800,177 850,184 925,218 970,218 1000,228 1020,228 1045,208 1065,201 1115,201']
  ]],
  ['long', [
    [1350, '1115,201 1140,244 1165,223 1235,215 1258,195 1285,185 1307,181 1330,190'],
    [2700, '5,233 30,237 52,229 75,228 100,212 125,217 195,217 220,208 242,195 272,194 290,182 315,187 345,180 390,180 412,168 440,168 455,162 495,162 508,157 530,165 580,208 612,210 630,205']
  ]],
  ['short', [[2700, '630,205 652,71 675,125 700,168 725,175 750,186 773,176 797,158 820,168 872,168 915,212 935,227 965,253 990,266 1010,272 1037,289 1060,272']]],
  ['long', [[2700, '1060,272 1085,367 1110,353 1132,338 1157,346 1205,324 1230,313 1252,315']]]
];

function toPoints(parts) {
  return parts.map(([start, text]) => text.split(' ').map(pair => {
    const [x, y] = pair.split(',').map(Number);
    return `${Math.round((x + start) / 3 - 5)},${Math.round(y / 3 - 7)}`;
  }).join(' ')).join(' ');
}

// day separators, drawn in both panes
let days = '';
for (let x = 24; x < 1320; x += 184) {
  days += `<line class="day" x1="${x + 0.5}" x2="${x + 0.5}" y1="0" y2="100%"/>`;
}

let price = days;
candles.trim().split(',').forEach((row, i) => {
  const [high, top, bottom, low, kind] = row.trim().split(' ');
  const x = i * STEP;
  price += `<rect class="wick" x="${x}" y="${high - TOP}" width="1" height="${Math.max(low - high, 1)}"/>`;
  if (bottom - top < 2) {
    price += `<rect class="wick" x="${x - 2}" y="${top - TOP}" width="5" height="${bottom - top + 1}"/>`;
  } else {
    price += `<rect class="candle ${kind === 'y' ? 'rise' : 'fall'}" x="${x - 1.5}" y="${top - TOP + 0.5}" width="4" height="${bottom - top - 1}"/>`;
  }
});

price += '<path class="sell-arrow" d="M271 42h3v7l3-3h2v3l-6 6h-1l-6-6v-3h2l3 3z"/>';
price += '<path class="sell-arrow" d="M1111 139h3v7l3-3h2v3l-6 6h-1l-6-6v-3h2l3 3z"/>';
price += '<path class="buy-arrow" d="M822 276h4v-8l3 3h1v-4l-6-5-6 5v4h1l3-3z"/>';
price += '<path class="buy-arrow" d="M1256 424l-4 4h8z"/>';
document.getElementById('price').innerHTML = price;

document.getElementById('signal').innerHTML = days +
  `<polyline class="band" points="${toPoints(band)}"/>` +
  trends.map(([side, parts]) => `<polyline class="trend ${side}" points="${toPoints(parts)}"/>`).join('');

// connection bars in the status bar
let bars = '';
for (let i = 0; i < 8; i++) {
  const h = 9 - i;
  bars += `<rect x="${i * 3}" y="0" width="2" height="${h}" fill="#6b8e00"/>`;
  bars += `<rect x="${i * 3}" y="${h + 1}" width="2" height="${13 - h}" fill="#0a4a6e"/>`;
}
document.getElementById('traffic').innerHTML = bars;
```
